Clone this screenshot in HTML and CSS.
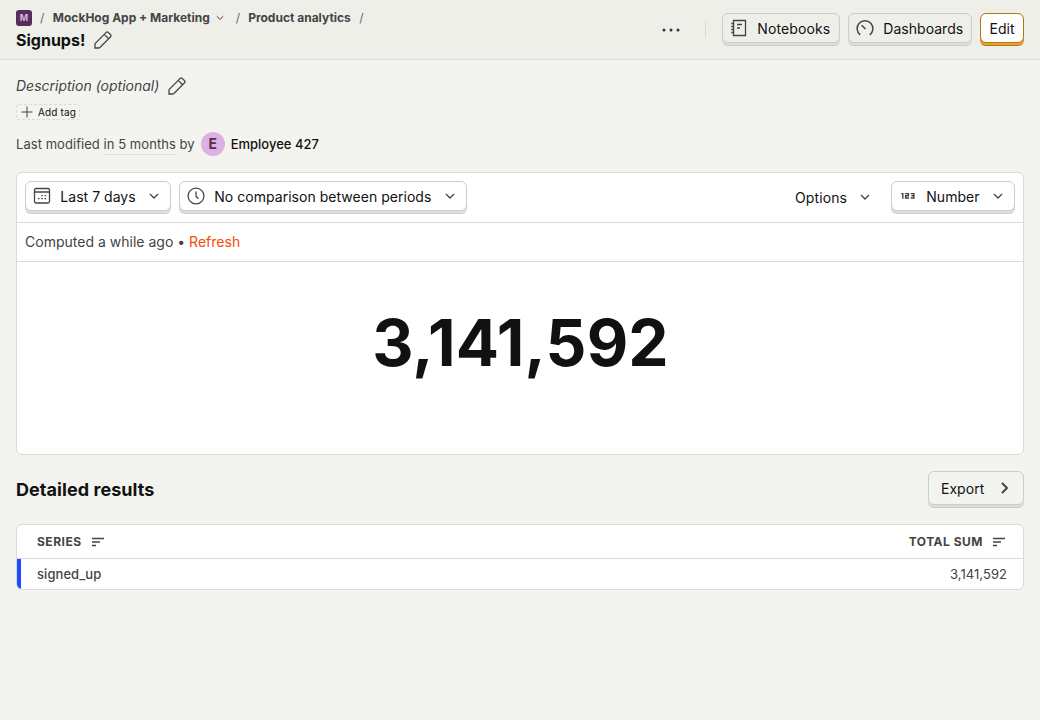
FILE: index.html
```html
<!DOCTYPE html>
<html lang="en">
<head>
<meta charset="utf-8">
<title>Signups!</title>
<link rel="stylesheet" href="styles.css">
</head>
<body>
<header class="topbar">
  <div class="topbar-left">
    <nav class="crumbs">
      <span class="project">M</span>
      <span class="slash slash-a">/</span>
      <span class="crumb crumb-app">MockHog App + Marketing</span>
      <svg class="chev-small" viewBox="0 0 10 10"><path d="M1.800 3.300 5 6.400 8.200 3.300"/></svg>
      <span class="slash slash-b">/</span>
      <span class="crumb crumb-product">Product analytics</span>
      <span class="slash">/</span>
    </nav>
    <div class="title-row">
      <h1>Signups!</h1>
      <svg class="pencil" viewBox="0 0 18 18"><path d="M1 17v-3.600c0-.5.200-.9.500-1.300L12.200 1.400a1.400 1.400 0 0 1 2 0l2.400 2.400a1.400 1.400 0 0 1 0 2L5.900 16.500c-.4.300-.8.500-1.300.5zM10.200 3.400l4.400 4.400"/></svg>
    </div>
  </div>
  <div class="actions">
    <svg class="dots" viewBox="0 0 20 6"><circle cx="3" cy="3" r="1.500"/><circle cx="10" cy="3" r="1.500"/><circle cx="17" cy="3" r="1.500"/></svg>
    <span class="divider"></span>
    <button class="btn btn-notebooks">
      <svg class="icon" viewBox="0 0 18 18"><path d="M3.500 1.500h12v15h-12zM1.300 4.500h3M1.300 7.500h3M1.300 10.500h3M1.300 13.500h3M7 5.500h5M7 9h3"/></svg>
      <span>Notebooks</span>
    </button>
    <button class="btn btn-dashboards">
      <svg class="icon icon-gauge" viewBox="0 0 18 18"><path d="M4.200 15.800a7.900 7.900 0 1 1 9.600 0M9.500 10 5.600 6.200"/></svg>
      <span>Dashboards</span>
    </button>
    <button class="btn btn-edit">Edit</button>
  </div>
</header>
<main class="page">
  <div class="description">
    <span class="description-text">Description (optional)</span>
    <svg class="pencil" viewBox="0 0 18 18"><path d="M1 17v-3.600c0-.5.200-.9.500-1.300L12.200 1.400a1.400 1.400 0 0 1 2 0l2.400 2.400a1.400 1.400 0 0 1 0 2L5.900 16.500c-.4.300-.8.500-1.300.5zM10.200 3.400l4.400 4.400"/></svg>
  </div>
  <div class="tag">
    <svg class="plus" viewBox="0 0 12 12"><path d="M6 .5v11M.5 6h11"/></svg>
    <span>Add tag</span>
  </div>
  <div class="modified">
    <span class="modified-text">Last modified <span class="when">in 5 months</span> by</span>
    <span class="avatar">E</span>
    <span class="person">Employee 427</span>
  </div>
  <section class="card">
    <div class="filters">
      <button class="btn btn-days">
        <svg class="icon" viewBox="0 0 18 18"><rect x="1.500" y="1.500" width="15" height="14.500" rx="1.500"/><path d="M1.500 5h15M8.300 8.700h1.500M11.600 8.700h1.500M5 11.700h1.500M8.300 11.700h1.500M11.600 11.700h1.500"/></svg>
        <span>Last 7 days</span>
        <svg class="chev" viewBox="0 0 12 12"><path d="M2 4l4 4 4-4"/></svg>
      </button>
      <button class="btn btn-compare">
        <svg class="icon" viewBox="0 0 18 18"><circle cx="9" cy="9" r="7.900"/><path d="M9 4.500v4.700l2.400 2.600"/></svg>
        <span>No comparison between periods</span>
        <svg class="chev" viewBox="0 0 12 12"><path d="M2 4l4 4 4-4"/></svg>
      </button>
      <div class="options">
        <span>Options</span>
        <svg class="chev" viewBox="0 0 12 12"><path d="M2 4l4 4 4-4"/></svg>
      </div>
      <button class="btn btn-number">
        <svg class="icon icon-123" viewBox="0 0 18 18"><path d="M2.200 6.600h1.600v5.100M6 6.600h3.400v2.200H6.600V11h3.500M11.700 6.600h3.200V11h-3.200M12.500 8.800h2.400"/></svg>
        <span>Number</span>
        <svg class="chev" viewBox="0 0 12 12"><path d="M2 4l4 4 4-4"/></svg>
      </button>
    </div>
    <div class="computed">Computed a while ago • <a class="refresh">Refresh</a></div>
    <div class="big-number">3,141,592</div>
  </section>
  <div class="results-head">
    <h2>Detailed results</h2>
    <button class="btn btn-export">
      <span>Export</span>
      <svg class="arrow" viewBox="0 0 12 14"><path d="M3 2l5 5-5 5"/></svg>
    </button>
  </div>
  <section class="table">
    <div class="row row-head">
      <div class="cell"><span class="th">SERIES</span><svg class="sort" viewBox="0 0 12 8"><path d="M0 .5h12M0 4h8M0 7.500h4"/></svg></div>
      <div class="cell"><span class="th">TOTAL SUM</span><svg class="sort" viewBox="0 0 12 8"><path d="M0 .5h12M0 4h8M0 7.500h4"/></svg></div>
    </div>
    <div class="row row-data">
      <span class="series">signed_up</span>
      <span class="total">3,141,592</span>
    </div>
  </section>
</main>
</body>
</html>
```
FILE: styles.css
```css
* { box-sizing: border-box; }
body {
  margin: 0;
  height: 720px;
  background: #f3f4ef;
  color: #111;
  font-family: Inter, "Liberation Sans", sans-serif;
  font-size: 14px;
  overflow: hidden;
}
h1, h2 { margin: 0; font-weight: 700; }
svg { display: block; flex: none; fill: none; stroke: #444; overflow: visible; }
span { white-space: nowrap; }

.topbar {
  display: flex;
  justify-content: space-between;
  height: 60px;
  padding: 0 16px;
  background: #eeefe9;
  border-bottom: 1px solid #dadbd4;
}
.topbar-left { padding-top: 9px; }
.crumbs { display: flex; align-items: center; height: 17px; font-size: 12px; font-weight: 700; color: #444; }
.project {
  width: 16px; height: 16px; border-radius: 3px;
  background: #572d5c; color: #dcb1e3;
  font-size: 9px; line-height: 16px; text-align: center;
}
.slash { font-weight: 400; color: #666; }
.slash-a { margin: 0 8.5px 0 8px; }
.slash-b { margin: 0 8px 0 11px; }
.crumb-product { margin-right: 8.5px; }
.chev-small { width: 10px; height: 10px; margin-left: 5px; }
.title-row { display: flex; align-items: center; gap: 9px; height: 28px; }
h1 { font-size: 16px; }
.pencil { width: 18px; height: 18px; stroke-width: 1.3; }

.actions { display: flex; padding-top: 13px; }
.dots { width: 20px; height: 6px; margin: 14px 24px 0 0; fill: #333; stroke: none; }
.divider { width: 1px; height: 17px; margin: 8px 16px 0 0; background: #dadbd4; }
.btn {
  display: flex;
  align-items: center;
  flex: none;
  height: 30px;
  margin: 0;
  padding: 0 7px;
  background: transparent;
  border: 1px solid #ccc;
  border-radius: 6px;
  box-shadow: 0 2px 0 #e1dddd, 0 3px 0 #ccc;
  color: #111;
  font-family: inherit;
  font-size: 14px;
  font-weight: 400;
  letter-spacing: .03px;
}
.icon { width: 18px; height: 18px; margin-right: 9.3px; stroke-width: 1.3; }
.icon-gauge { stroke-width: 1.5; }
.btn-notebooks { width: 118px; margin-right: 8px; letter-spacing: .1px; }
.btn-dashboards { width: 124px; margin-right: 8px; }
.btn-edit { width: 44px; justify-content: center; background: #fff; border-color: #b17816; box-shadow: 0 2px 0 #f1a12b, 0 3px 0 #b17816; }

.page { padding: 14px 16px 0; }
.description { display: flex; align-items: center; height: 24px; gap: 9px; font-style: italic; color: #444; }
.description-text { padding-bottom: 1px; }
.tag {
  display: flex; align-items: center; gap: 5px;
  width: 64px; height: 16px; margin-top: 6px; padding: 0 5px 0 4px;
  border: 1px dashed #dadbd4; border-radius: 3px;
  font-size: 10px; font-weight: 400; letter-spacing: .14px;
}
.plus { width: 12px; height: 12px; }
.modified { display: flex; align-items: center; height: 24px; margin-top: 12px; font-size: 13px; color: #444; }
.modified-text { letter-spacing: .05px; }
.when { padding-bottom: 2px; border-bottom: 1px solid #e0e1db; }
.avatar {
  width: 24px; height: 24px; margin: 0 6px; border-radius: 50%;
  background: #dcb1e3; color: #572d5c;
  font-size: 14px; font-weight: 700; line-height: 24px; text-align: center;
}
.person { font-weight: 500; color: #111; }

.card { height: 283px; margin-top: 16px; background: #fff; border: 1px solid #dadbd4; border-radius: 6px; }
.filters { display: flex; height: 50px; padding: 8px 8px 0; border-bottom: 1px solid #dadbd4; }
.chev { width: 12px; height: 12px; margin-left: auto; stroke-width: 1.3; }
.btn-days { width: 146px; padding-right: 10px; margin-right: 8px; background: #fff; }
.btn-compare { width: 288px; padding-right: 10px; background: #fff; }
.options { display: flex; align-items: center; width: 76px; height: 32px; margin: 0 20px 0 auto; letter-spacing: .1px; }
.btn-number { width: 124px; padding-right: 10px; background: #fff; }
.icon-123 { stroke-width: 1.4; }
.computed { height: 39px; padding-left: 8px; line-height: 38px; color: #444; border-bottom: 1px solid #dadbd4; letter-spacing: .01px; }
.refresh { color: #f54e00; }
.big-number { height: 162px; padding-left: 1px; line-height: 161px; font-size: 64px; font-weight: 700; text-align: center; letter-spacing: .15px; }

.results-head { display: flex; justify-content: space-between; height: 69px; padding-top: 16px; }
h2 { height: 36px; line-height: 38px; font-size: 18px; letter-spacing: .06px; }
.btn-export { width: 96px; height: 34px; padding: 0 12px; justify-content: space-between; }
.arrow { width: 12px; height: 14px; stroke-width: 2; }

.table { height: 66px; background: #fff; border: 1px solid #dadbd4; border-radius: 6px; overflow: hidden; }
.row { display: flex; justify-content: space-between; align-items: center; }
.row-head { height: 34px; padding: 0 18px 0 20px; border-bottom: 1px solid #dadbd4; }
.cell { display: flex; align-items: center; gap: 10px; }
.th { font-size: 12px; font-weight: 700; letter-spacing: .5px; color: #444; }
.sort { width: 12px; height: 8px; stroke-width: 1.3; }
.row-data { height: 30px; padding: 0 16px; border-left: 4px solid #1d4aff; font-size: 13px; color: #444; letter-spacing: .06px; }
.series { font-weight: 500; }
```
